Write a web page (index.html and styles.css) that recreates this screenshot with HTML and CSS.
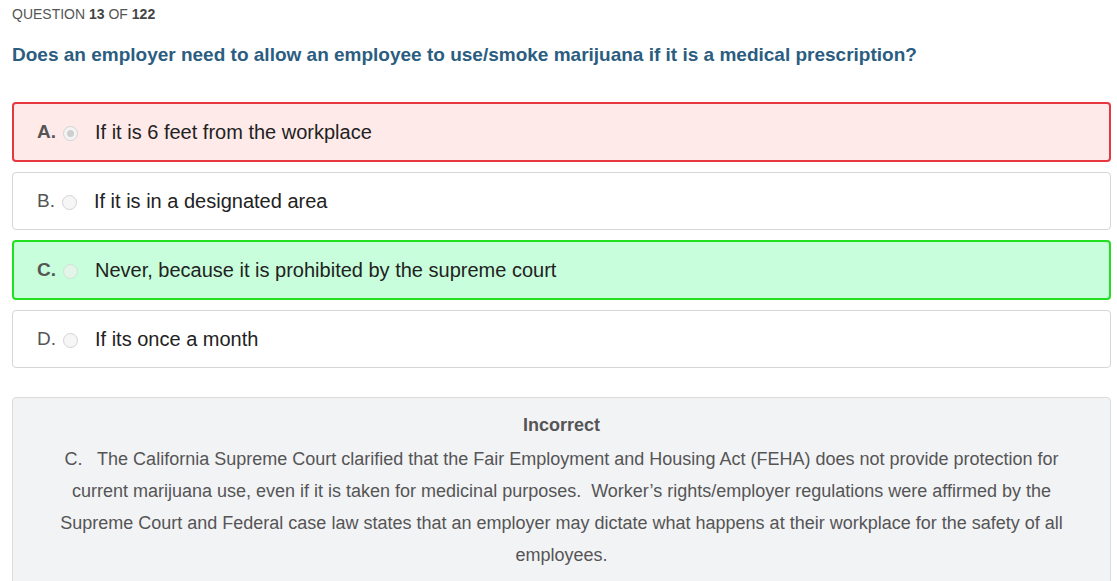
FILE: index.html
```html
<!DOCTYPE html>
<html>
<head>
<meta charset="utf-8">
<link rel="stylesheet" href="styles.css">
</head>
<body>
<div class="page">
  <div class="counter">QUESTION <b>13</b> OF <b>122</b></div>
  <h1 class="question">Does an employer need to allow an employee to use/smoke marijuana if it is a medical prescription?</h1>
  <div class="options">
    <div class="option wrong"><span class="letter strong">A.</span><span class="radio checked"></span><span class="text">If it is 6 feet from the workplace</span></div>
    <div class="option"><span class="letter">B.</span><span class="radio"></span><span class="text">If it is in a designated area</span></div>
    <div class="option right"><span class="letter strong">C.</span><span class="radio"></span><span class="text">Never, because it is prohibited by the supreme court</span></div>
    <div class="option"><span class="letter">D.</span><span class="radio"></span><span class="text">If its once a month</span></div>
  </div>
  <div class="feedback">
    <div class="verdict">Incorrect</div>
    <p class="explain">C.&nbsp;&nbsp; The California Supreme Court clarified that the Fair Employment and Housing Act (FEHA) does not provide protection for current marijuana use, even if it is taken for medicinal purposes.&nbsp; Worker’s rights/employer regulations were affirmed by the Supreme Court and Federal case law states that an employer may dictate what happens at their workplace for the safety of all employees.</p>
  </div>
</div>
</body>
</html>
```

FILE: styles.css
```css
html, body {
  margin: 0;
  padding: 0;
  background: #ffffff;
}
body {
  font-family: "Liberation Sans", Arial, sans-serif;
  color: #333;
}
.page {
  padding: 6px 6px 0 12px;
}
.counter {
  font-size: 14px;
  color: #555;
  line-height: 16px;
  text-transform: uppercase;
}
.counter b {
  color: #444;
}
.question {
  margin: 22px 0 36px 0;
  font-size: 19px;
  line-height: 22px;
  font-weight: bold;
  color: #2b5d80;
}
.options {
  display: flex;
  flex-direction: column;
  gap: 10px;
}
.option {
  display: flex;
  align-items: center;
  height: 58px;
  box-sizing: border-box;
  border: 1px solid #d6d6d8;
  border-radius: 4px;
  padding: 0 0 0 24px;
  background: #fff;
  font-size: 20px;
  color: #222;
}
.option.wrong {
  height: 60px;
  border: 2px solid #e8383f;
  background: #ffeaea;
  padding-left: 23px;
}
.option.right {
  height: 60px;
  border: 2px solid #22e01f;
  background: #c8fedb;
  padding-left: 23px;
}
.letter {
  color: #555;
  font-size: 19px;
}
.letter.strong {
  font-weight: bold;
}
.radio {
  width: 15px;
  height: 15px;
  border-radius: 50%;
  border: 1px solid #d4d4d4;
  background: #f6f6f6;
  box-sizing: border-box;
  margin: 3px 17px 0 7px;
  position: relative;
}
.option.right .radio {
  background: #e2f5e8;
  border-color: #cfe3d4;
}
.radio.checked {
  border-color: #d3d3d3;
  background: #f4f4f4;
}
.radio.checked::after {
  content: "";
  position: absolute;
  left: 3px;
  top: 3px;
  width: 7px;
  height: 7px;
  border-radius: 50%;
  background: #cfcfcf;
}
.text {
  color: #222;
}
.feedback {
  margin-top: 29px;
  border: 1px solid #dcdcdc;
  border-radius: 4px;
  background: #f2f3f5;
  padding: 15px 40px 20px 40px;
  text-align: center;
  color: #555;
}
.verdict {
  font-weight: bold;
  font-size: 18px;
  line-height: 24px;
}
.explain {
  margin: 6px 0 0 0;
  font-size: 18px;
  line-height: 32px;
}
```
